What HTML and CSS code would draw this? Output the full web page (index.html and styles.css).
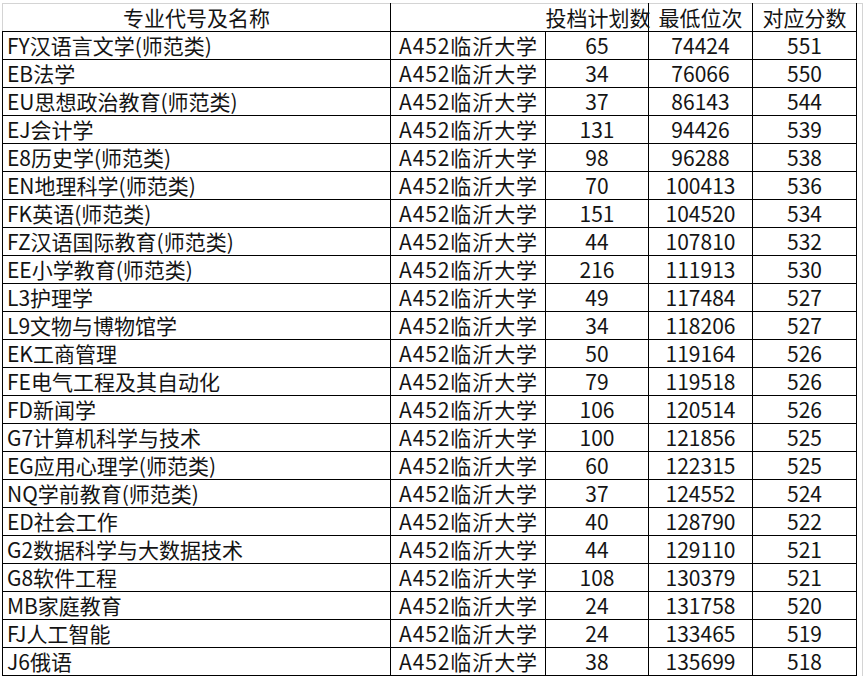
FILE: index.html
```html
<!DOCTYPE html>
<html lang="zh-CN">
<head>
<meta charset="utf-8">
<title>临沂大学 投档</title>
<link rel="stylesheet" href="styles.css">
</head>
<body>
<table class="sheet">
  <colgroup>
    <col class="c-name"><col class="c-school"><col class="c-plan"><col class="c-rank"><col class="c-score"><col class="c-gap">
  </colgroup>
  <thead>
    <tr class="head">
      <th class="h-name">专业代号及名称</th>
      <th class="h-school"></th>
      <th class="h-plan">投档计划数</th>
      <th class="h-num">最低位次</th>
      <th class="h-num">对应分数</th>
      <th class="gap"></th>
    </tr>
  </thead>
  <tbody>
    <tr><td class="name">FY汉语言文学(师范类)</td><td class="school">A452临沂大学</td><td class="num">65</td><td class="num">74424</td><td class="num">551</td><td class="gap"></td></tr>
    <tr><td class="name">EB法学</td><td class="school">A452临沂大学</td><td class="num">34</td><td class="num">76066</td><td class="num">550</td><td class="gap"></td></tr>
    <tr><td class="name">EU思想政治教育(师范类)</td><td class="school">A452临沂大学</td><td class="num">37</td><td class="num">86143</td><td class="num">544</td><td class="gap"></td></tr>
    <tr><td class="name">EJ会计学</td><td class="school">A452临沂大学</td><td class="num">131</td><td class="num">94426</td><td class="num">539</td><td class="gap"></td></tr>
    <tr><td class="name">E8历史学(师范类)</td><td class="school">A452临沂大学</td><td class="num">98</td><td class="num">96288</td><td class="num">538</td><td class="gap"></td></tr>
    <tr><td class="name">EN地理科学(师范类)</td><td class="school">A452临沂大学</td><td class="num">70</td><td class="num">100413</td><td class="num">536</td><td class="gap"></td></tr>
    <tr><td class="name">FK英语(师范类)</td><td class="school">A452临沂大学</td><td class="num">151</td><td class="num">104520</td><td class="num">534</td><td class="gap"></td></tr>
    <tr><td class="name">FZ汉语国际教育(师范类)</td><td class="school">A452临沂大学</td><td class="num">44</td><td class="num">107810</td><td class="num">532</td><td class="gap"></td></tr>
    <tr><td class="name">EE小学教育(师范类)</td><td class="school">A452临沂大学</td><td class="num">216</td><td class="num">111913</td><td class="num">530</td><td class="gap"></td></tr>
    <tr><td class="name">L3护理学</td><td class="school">A452临沂大学</td><td class="num">49</td><td class="num">117484</td><td class="num">527</td><td class="gap"></td></tr>
    <tr><td class="name">L9文物与博物馆学</td><td class="school">A452临沂大学</td><td class="num">34</td><td class="num">118206</td><td class="num">527</td><td class="gap"></td></tr>
    <tr><td class="name">EK工商管理</td><td class="school">A452临沂大学</td><td class="num">50</td><td class="num">119164</td><td class="num">526</td><td class="gap"></td></tr>
    <tr><td class="name">FE电气工程及其自动化</td><td class="school">A452临沂大学</td><td class="num">79</td><td class="num">119518</td><td class="num">526</td><td class="gap"></td></tr>
    <tr><td class="name">FD新闻学</td><td class="school">A452临沂大学</td><td class="num">106</td><td class="num">120514</td><td class="num">526</td><td class="gap"></td></tr>
    <tr><td class="name">G7计算机科学与技术</td><td class="school">A452临沂大学</td><td class="num">100</td><td class="num">121856</td><td class="num">525</td><td class="gap"></td></tr>
    <tr><td class="name">EG应用心理学(师范类)</td><td class="school">A452临沂大学</td><td class="num">60</td><td class="num">122315</td><td class="num">525</td><td class="gap"></td></tr>
    <tr><td class="name">NQ学前教育(师范类)</td><td class="school">A452临沂大学</td><td class="num">37</td><td class="num">124552</td><td class="num">524</td><td class="gap"></td></tr>
    <tr><td class="name">ED社会工作</td><td class="school">A452临沂大学</td><td class="num">40</td><td class="num">128790</td><td class="num">522</td><td class="gap"></td></tr>
    <tr><td class="name">G2数据科学与大数据技术</td><td class="school">A452临沂大学</td><td class="num">44</td><td class="num">129110</td><td class="num">521</td><td class="gap"></td></tr>
    <tr><td class="name">G8软件工程</td><td class="school">A452临沂大学</td><td class="num">108</td><td class="num">130379</td><td class="num">521</td><td class="gap"></td></tr>
    <tr><td class="name">MB家庭教育</td><td class="school">A452临沂大学</td><td class="num">24</td><td class="num">131758</td><td class="num">520</td><td class="gap"></td></tr>
    <tr><td class="name">FJ人工智能</td><td class="school">A452临沂大学</td><td class="num">24</td><td class="num">133465</td><td class="num">519</td><td class="gap"></td></tr>
    <tr><td class="name">J6俄语</td><td class="school">A452临沂大学</td><td class="num">38</td><td class="num">135699</td><td class="num">518</td><td class="gap"></td></tr>
  </tbody>
</table>
</body>
</html>
```
FILE: styles.css
```css
html, body {
  margin: 0;
  padding: 0;
  background: #ffffff;
}
body {
  padding: 3px 0 0 2px;
  font-family: "Noto Sans CJK SC", "Noto Sans", sans-serif;
  color: #141414;
}
.sheet {
  border-collapse: collapse;
  table-layout: fixed;
  width: 861px;
}
.c-name { width: 388px; }
.c-school { width: 155px; }
.c-plan { width: 103px; }
.c-rank { width: 104px; }
.c-score { width: 104px; }
.c-gap { width: 6px; }

.sheet th,
.sheet td {
  height: 27px;
  padding: 0;
  border: 1px solid #000000;
  font-size: 21px;
  font-weight: normal;
  line-height: 27px;
  white-space: nowrap;
  vertical-align: bottom;
}
.sheet .head th {
  border-top: 1px solid #d4d4d4;
}
.sheet .head .h-name {
  border-left: 1px solid #d4d4d4;
  text-align: center;
}
.sheet .head .h-school {
  border-right: none;
}
.sheet .head .h-plan {
  border-left: none;
  text-align: center;
  overflow: visible;
}
.sheet .head .h-num {
  text-align: center;
}
.sheet .name {
  text-align: left;
  padding-left: 4px;
}
.sheet .school {
  text-align: left;
  padding-left: 8px;
  letter-spacing: 0.9px;
}
.sheet .num {
  text-align: center;
}
.sheet .gap {
  border-top: none;
  border-bottom: none;
  border-right: 1px solid #d4d4d4;
}
```
